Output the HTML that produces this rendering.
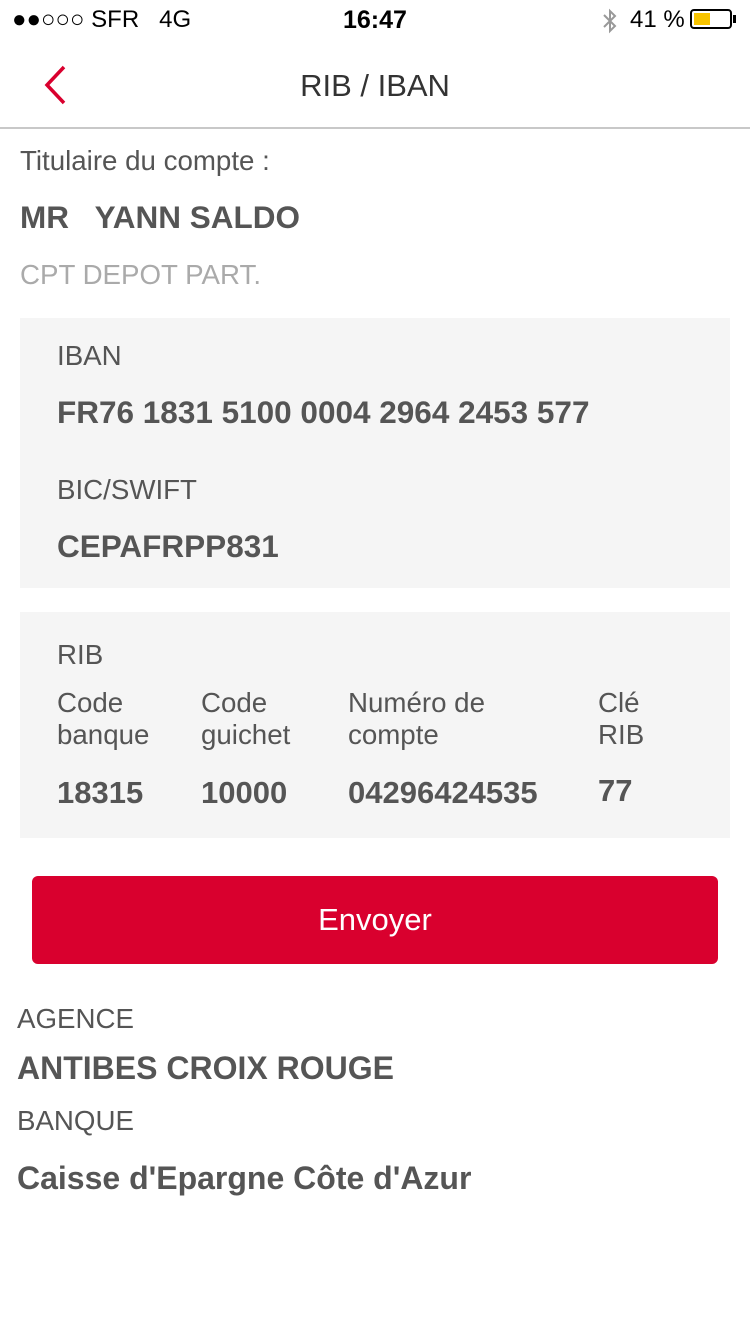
<!DOCTYPE html>
<html><head><meta charset="utf-8"><style>
body{margin:0;width:750px;height:1334px;background:#fff;font-family:"Liberation Sans",sans-serif;color:#555;position:relative;overflow:hidden}
.a{position:absolute;white-space:nowrap}
.b{font-weight:bold}
</style></head><body>
<div class="a" style="left:12px;top:6px;font-size:24px;color:#000">●●○○○ SFR &nbsp; 4G</div>
<div class="a b" style="left:343px;top:6px;font-size:25px;color:#000">16:47</div>
<svg class="a" style="left:600px;top:8px" width="20" height="28" viewBox="0 0 20 28"><path d="M4 7 L15 18 L10 23 L10 3 L15 8 L4 19" fill="none" stroke="#999" stroke-width="2"/></svg>
<div class="a" style="left:630px;top:6px;font-size:24px;color:#000">41 %</div>
<div class="a" style="left:690px;top:9px;width:42px;height:20px;border:2px solid #000;border-radius:4px;box-sizing:border-box"><div style="margin:2px;width:16px;height:12px;background:#f8c400"></div></div>
<div class="a" style="left:733px;top:15px;width:3px;height:8px;background:#000"></div>
<svg class="a" style="left:40px;top:64px" width="30" height="42"><path d="M24 3 L7 21 L24 39" fill="none" stroke="#d9002e" stroke-width="3.5"/></svg>
<div class="a" style="left:0;width:750px;text-align:center;top:68px;font-size:31px;color:#333">RIB / IBAN</div>
<div class="a" style="left:0;top:127px;width:750px;height:2px;background:#c8c8c8"></div>
<div class="a" style="left:20px;top:145px;font-size:27.7px">Titulaire du compte :</div>
<div class="a b" style="left:20px;top:199px;font-size:31.5px">MR &nbsp; YANN SALDO</div>
<div class="a" style="left:20px;top:259px;font-size:27.7px;color:#aaa">CPT DEPOT PART.</div>
<div class="a" style="left:20px;top:318px;width:710px;height:270px;background:#f5f5f5"></div>
<div class="a" style="left:57px;top:340px;font-size:27.7px">IBAN</div>
<div class="a b" style="left:57px;top:394px;font-size:31.5px">FR76 1831 5100 0004 2964 2453 577</div>
<div class="a" style="left:57px;top:474px;font-size:27.7px">BIC/SWIFT</div>
<div class="a b" style="left:57px;top:528px;font-size:31.5px">CEPAFRPP831</div>
<div class="a" style="left:20px;top:612px;width:710px;height:226px;background:#f5f5f5"></div>
<div class="a" style="left:57px;top:639px;font-size:27.7px">RIB</div>
<div class="a" style="left:57px;top:687px;font-size:27.7px;line-height:32px">Code<br>banque</div>
<div class="a" style="left:201px;top:687px;font-size:27.7px;line-height:32px">Code<br>guichet</div>
<div class="a" style="left:348px;top:687px;font-size:27.7px;line-height:32px">Numéro de<br>compte</div>
<div class="a" style="left:598px;top:687px;font-size:27.7px;line-height:32px">Clé<br>RIB</div>
<div class="a b" style="left:57px;top:775px;font-size:31px">18315</div>
<div class="a b" style="left:201px;top:775px;font-size:31px">10000</div>
<div class="a b" style="left:348px;top:775px;font-size:31px">04296424535</div>
<div class="a b" style="left:598px;top:773px;font-size:31px">77</div>
<div class="a" style="left:32px;top:876px;width:686px;height:88px;background:#d9002e;border-radius:6px;color:#fff;font-size:31px;text-align:center;line-height:88px">Envoyer</div>
<div class="a" style="left:17px;top:1003px;font-size:27.7px">AGENCE</div>
<div class="a b" style="left:17px;top:1050px;font-size:32px">ANTIBES CROIX ROUGE</div>
<div class="a" style="left:17px;top:1105px;font-size:27.7px">BANQUE</div>
<div class="a b" style="left:17px;top:1160px;font-size:32px">Caisse d'Epargne Côte d'Azur</div>
</body></html>
